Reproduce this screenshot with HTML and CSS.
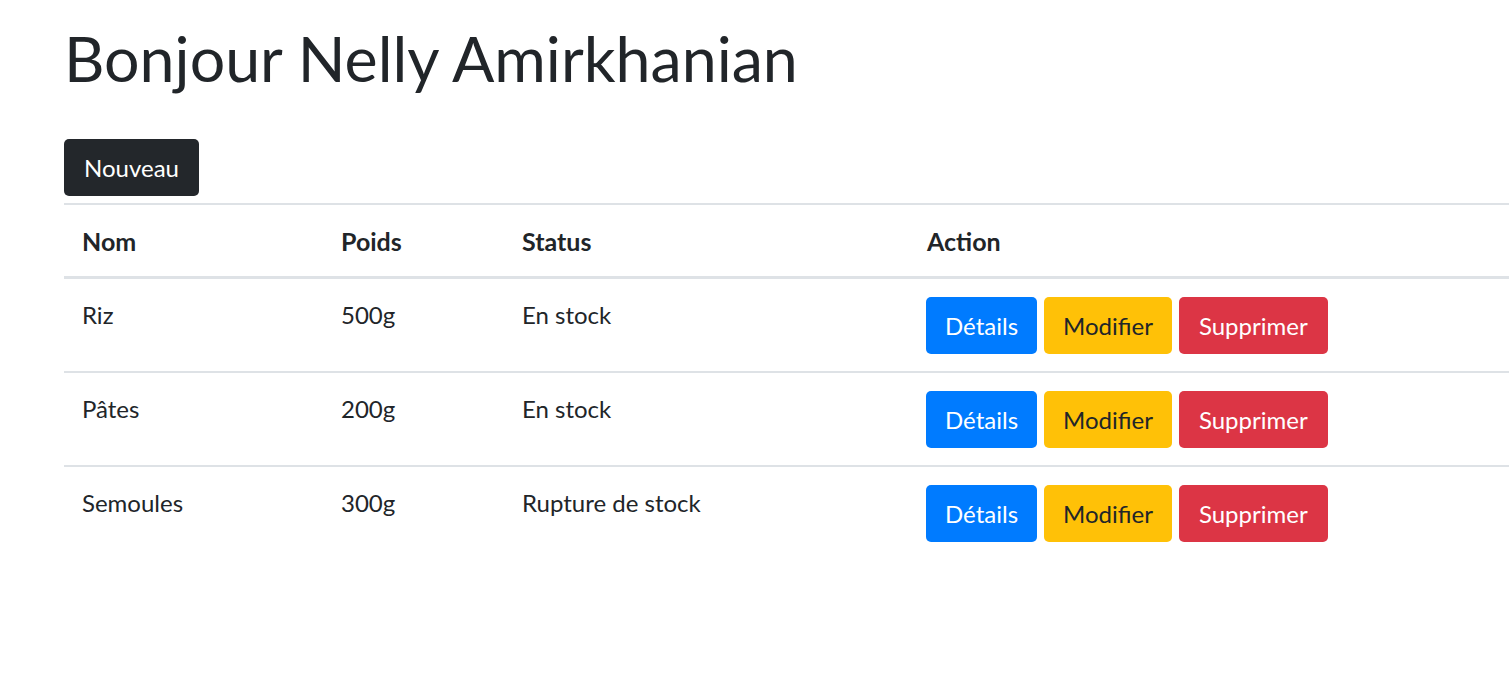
FILE: index.html
```html
<!DOCTYPE html>
<html lang="fr">
<head>
<meta charset="utf-8">
<title>Produits</title>
<link rel="stylesheet" href="styles.css">
</head>
<body>
<div class="container">
  <h1 class="title">Bonjour Nelly Amirkhanian</h1>
  <a class="btn btn-dark" href="#">Nouveau</a>
  <table class="table">
    <thead>
      <tr>
        <th class="c-nom">Nom</th>
        <th class="c-poids">Poids</th>
        <th class="c-status">Status</th>
        <th class="c-action">Action</th>
      </tr>
    </thead>
    <tbody>
      <tr>
        <td>Riz</td>
        <td>500g</td>
        <td>En stock</td>
        <td><div class="actions"><a class="btn btn-primary" href="#">Détails</a><a class="btn btn-warning" href="#">Modifier</a><a class="btn btn-danger" href="#">Supprimer</a></div></td>
      </tr>
      <tr>
        <td>Pâtes</td>
        <td>200g</td>
        <td>En stock</td>
        <td><div class="actions"><a class="btn btn-primary" href="#">Détails</a><a class="btn btn-warning" href="#">Modifier</a><a class="btn btn-danger" href="#">Supprimer</a></div></td>
      </tr>
      <tr>
        <td>Semoules</td>
        <td>300g</td>
        <td>Rupture de stock</td>
        <td><div class="actions"><a class="btn btn-primary" href="#">Détails</a><a class="btn btn-warning" href="#">Modifier</a><a class="btn btn-danger" href="#">Supprimer</a></div></td>
      </tr>
    </tbody>
  </table>
</div>
</body>
</html>
```
FILE: styles.css
```css
html, body {
  margin: 0;
  padding: 0;
  background: #fff;
}
body {
  font-family: Lato, "Open Sans", "Liberation Sans", sans-serif;
  color: #212529;
  font-size: 24px;
  overflow: hidden;
}
.container {
  padding: 22px 0 0 64px;
  width: 1500px;
}
.title {
  margin: 0 0 45px 0;
  font-size: 62.7px;
  font-weight: 400;
  line-height: 72px;
  color: #212529;
}
.btn {
  display: inline-block;
  box-sizing: border-box;
  height: 57px;
  line-height: 55px;
  padding: 0 18px;
  border: 1px solid transparent;
  border-radius: 5px;
  font-size: 24px;
  text-decoration: none;
  vertical-align: top;
}
.btn-dark { background: #23272b; color: #fff; padding: 0 19px; }
.btn-primary { background: #007bff; color: #fff; }
.btn-warning { background: #ffc107; color: #212529; }
.btn-danger { background: #dc3545; color: #fff; padding: 0 19px; }
.table {
  margin-top: 7px;
  width: 1460px;
  border-collapse: collapse;
}
.table th, .table td {
  text-align: left;
  vertical-align: top;
  padding: 18px 18px 17px 18px;
  border-top: 2px solid #dee2e6;
  line-height: 36px;
}
.table td:last-child {
  padding-left: 17px;
}
.table thead th {
  border-bottom: 3px solid #dee2e6;
  font-weight: 700;
  font-size: 25px;
}
.c-nom { width: 223px; }
.c-poids { width: 145px; }
.c-status { width: 369px; }
.actions {
  display: flex;
  gap: 7px;
}
```
